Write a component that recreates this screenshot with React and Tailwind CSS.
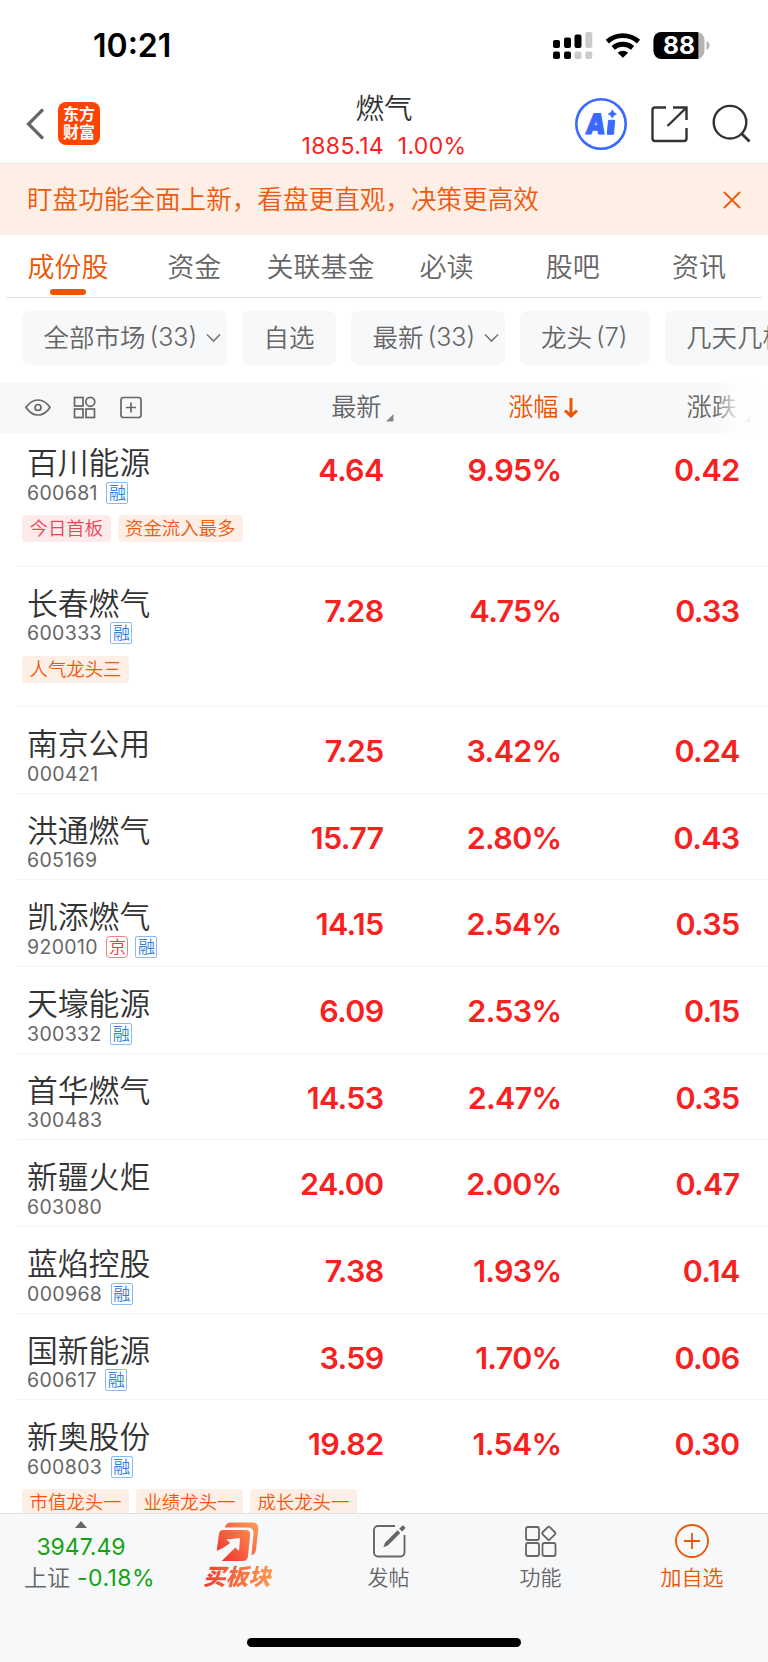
import React from "react";

const rows = [
  { name: "百川能源", code: "600681", marks: ["融"], price: "4.64", pct: "9.95%", diff: "0.42", tags: [["今日首板", "red"], ["资金流入最多", "orange"]] },
  { name: "长春燃气", code: "600333", marks: ["融"], price: "7.28", pct: "4.75%", diff: "0.33", tags: [["人气龙头三", "orange"]] },
  { name: "南京公用", code: "000421", marks: [], price: "7.25", pct: "3.42%", diff: "0.24" },
  { name: "洪通燃气", code: "605169", marks: [], price: "15.77", pct: "2.80%", diff: "0.43" },
  { name: "凯添燃气", code: "920010", marks: ["京", "融"], price: "14.15", pct: "2.54%", diff: "0.35" },
  { name: "天壕能源", code: "300332", marks: ["融"], price: "6.09", pct: "2.53%", diff: "0.15" },
  { name: "首华燃气", code: "300483", marks: [], price: "14.53", pct: "2.47%", diff: "0.35" },
  { name: "新疆火炬", code: "603080", marks: [], price: "24.00", pct: "2.00%", diff: "0.47" },
  { name: "蓝焰控股", code: "000968", marks: ["融"], price: "7.38", pct: "1.93%", diff: "0.14" },
  { name: "国新能源", code: "600617", marks: ["融"], price: "3.59", pct: "1.70%", diff: "0.06" },
  { name: "新奥股份", code: "600803", marks: ["融"], price: "19.82", pct: "1.54%", diff: "0.30", tags: [["市值龙头一", "orange"], ["业绩龙头一", "orange"], ["成长龙头一", "orange"]] },
];

function StatusBar() {
  return (
    <div className="flex h-[82px] shrink-0 items-start pt-[26px] pl-[93px]">
      <div className="w-[460px] text-[32px] leading-[40px] font-semibold text-black">10:21</div>
      <svg className="mt-[4px]" width="160" height="32" viewBox="553 30 160 32">
        <g fill="#000">
          <rect x="553" y="40" width="7" height="8" rx="2" />
          <rect x="564" y="37.5" width="7" height="10.5" rx="2" />
          <rect x="574.5" y="34.5" width="7" height="13.5" rx="2" />
          <rect x="553" y="51.5" width="7" height="7.5" rx="2" />
          <rect x="564" y="51.5" width="7" height="7.5" rx="2" />
        </g>
        <g fill="#cbcbcb">
          <rect x="585.3" y="32" width="7" height="16" rx="2" />
          <rect x="574.5" y="51.5" width="7" height="7.5" rx="2" />
          <rect x="585.3" y="51.5" width="7" height="7.5" rx="2" />
        </g>
        <g fill="none" stroke="#000" strokeWidth="4.8">
          <path d="M607.3 41.6a23.5 23.5 0 0 1 31.2 0" />
          <path d="M613.2 47.8a15 15 0 0 1 19.4 0" />
        </g>
        <path d="M617.6 52.7a8.2 8.2 0 0 1 10.6 0l-5.3 5.1z" fill="#000" />
        <clipPath id="battery"><rect x="653.5" y="32" width="51" height="27" rx="8" /></clipPath>
        <g clipPath="url(#battery)">
          <rect x="653" y="32" width="52" height="27" fill="#b4b4b4" />
          <rect x="653" y="32" width="45.3" height="27" fill="#000" />
        </g>
        <path d="M706.5 41c1.800.600 3 2.300 3 4.500s-1.200 3.900-3 4.500z" fill="#b4b4b4" />
        <text x="679" y="54.300" textAnchor="middle" fontSize="24.500" fontWeight="700" fill="#fff" fontFamily="Inter">88</text>
      </svg>
    </div>
  );
}

function Header() {
  return (
    <header className="flex h-[82px] shrink-0 items-start border-b border-[#e6e8ea]">
      <svg className="mt-[26px] ml-[26px]" width="18" height="32" viewBox="0 0 18 32" fill="none" stroke="#666" strokeWidth="3.200">
        <path d="M17 1.500L2.500 16l14.500 14.500" />
      </svg>
      <div className="mt-[20px] ml-[14px] flex h-[43px] w-[42px] flex-col items-center justify-center rounded-[8px] bg-[#ff4400] text-[16px] leading-[17.500px] font-bold text-white">
        <span>东方</span>
        <span>财富</span>
      </div>
      <div className="ml-[184px] flex w-[200px] flex-col items-center">
        <div className="mt-[9px] text-[28.500px] leading-[36px] font-[350] text-[#333]">燃气</div>
        <div className="mt-[1px] text-[23px] leading-[36px] tracking-[0.350px] whitespace-pre text-[#f7221f]">1885.14  1.00%</div>
      </div>
      <svg className="mt-[12px] ml-[91px]" width="180" height="60" viewBox="575 94 180 60" fill="none">
        <circle cx="601" cy="124" r="24.700" stroke="#3a69ff" strokeWidth="2.600" />
        <text transform="translate(585 133.500) skewX(-7)" fontFamily="Inter" fontSize="28" fontWeight="900" fill="#3a69ff" stroke="#3a69ff" strokeWidth="1.200" strokeLinejoin="round" textLength="19.500" lengthAdjust="spacingAndGlyphs">A</text>
        <path d="M608.500 120.300h6.200l-1.200 14h-6.200z" fill="#3a69ff" stroke="#3a69ff" strokeWidth="1" strokeLinejoin="round" />
        <path d="M612.300 109.800l1.500 2.700 2.700 1.500-2.700 1.500-1.500 2.700-1.500-2.700-2.700-1.500 2.700-1.500z" fill="#3a69ff" stroke="#3a69ff" strokeWidth=".6" />
        <g stroke="#333" strokeWidth="2.400">
          <path d="M666 107.500h-11a2.500 2.500 0 0 0-2.500 2.500v28.500a2.500 2.500 0 0 0 2.500 2.500h29a2.500 2.500 0 0 0 2.500-2.500V128" />
          <path d="M673 107.500h13.500V120M686 108l-18.500 18" />
          <circle cx="730" cy="122.200" r="16.300" />
          <path d="M741 133l8.500 8.500" strokeWidth="2.800" />
        </g>
      </svg>
    </header>
  );
}

const tabs = ["资金", "关联基金", "必读", "股吧", "资讯"];

function Tabs() {
  return (
    <nav className="mx-[6px] h-[63px] shrink-0 border-b border-[#e2e4e6] pt-[13px]">
      <div className="-ml-px grid grid-cols-6 text-center text-[27px] leading-[40px] font-[350] text-[#666]">
        <div className="flex flex-col items-center text-[#ee5500]">
          <span>成份股</span>
          <span className="mt-[1px] h-[5.500px] w-[36px] rounded-full bg-[#ee5500]" />
        </div>
        {tabs.map((t) => <span key={t} className="whitespace-nowrap">{t}</span>)}
      </div>
    </nav>
  );
}

function Chip({ label, count, arrow, width }) {
  return (
    <div className={`flex h-[54px] shrink-0 items-center rounded-[7px] bg-[#f7f8fa] pl-[21.500px] text-[#666] ${width}`}>
      <span className="text-[25.500px] font-[350] whitespace-nowrap">{label}</span>
      {count && <span className="ml-[4px] text-[25px] font-[350]">{count}</span>}
      {arrow && (
        <svg className="ml-[9px]" width="15" height="10" viewBox="0 0 15 10" fill="none" stroke="#777" strokeWidth="1.600">
          <path d="M1 1.500l6.500 6.500L14 1.500" />
        </svg>
      )}
    </div>
  );
}

function TableHead() {
  return (
    <div className="flex h-[50px] shrink-0 items-center bg-[#f7f8fa] text-[25.200px] font-[350] text-[#666]">
      <svg className="ml-[25px]" width="120" height="24" viewBox="25 396 120 24" fill="none" stroke="#666" strokeWidth="1.700">
        <path d="M26 407.500c3-4.500 7-7.500 12-7.500s9 3 12 7.500c-3 4.500-7 7.500-12 7.500s-9-3-12-7.500z" />
        <circle cx="38" cy="407.500" r="3" />
        <rect x="74.500" y="397.500" width="8.500" height="8.500" />
        <circle cx="90.300" cy="401.800" r="4.500" />
        <rect x="74.500" y="409" width="8.500" height="8.500" />
        <rect x="86" y="409" width="8.500" height="8.500" />
        <rect x="121" y="397.500" width="20" height="20" rx="2.500" />
        <path d="M131 402.500v10M126 407.500h10" />
      </svg>
      <div className="flex w-[248.500px] items-center justify-end">
        <span>最新</span>
        <svg className="mt-[21px] ml-[4px]" width="8" height="8" viewBox="0 0 8 8"><path d="M7.500 0v7.500H0z" fill="#888" /></svg>
      </div>
      <div className="flex w-[184px] items-center justify-end text-[#ee5500]">
        <span>涨幅</span>
        <svg className="ml-[5px]" width="14" height="20" viewBox="0 0 14 20" fill="none" stroke="#ee5500" strokeWidth="3">
          <path d="M7 0v18M1 12.500l6 5.500 6-5.500" />
        </svg>
      </div>
      <div className="relative flex h-full w-[190.500px] items-center pl-[109px]">
        <span>涨跌</span>
        <svg className="mt-[21px] ml-[6px]" width="8" height="8" viewBox="0 0 8 8"><path d="M7.500 0v7.500H0z" fill="#999" /></svg>
        <div className="absolute top-0 right-0 h-full w-[54px] bg-linear-to-r from-white/0 via-white/80 via-40% to-white" />
      </div>
    </div>
  );
}

function Mark({ text }) {
  const tone = text === "京" ? "border-[#f4817f] text-[#ee3a3a] rounded-[4px]" : "border-[#8abaf0] text-[#2f7fd8] rounded-[2px]";
  return <span className={`flex h-[22px] w-[22px] items-center justify-center border-[1.500px] text-[17px] leading-[18px] font-[350] ${tone}`}>{text}</span>;
}

function Row({ row, first }) {
  const height = first ? "h-[133.600px]" : row.tags ? "h-[140.600px]" : "h-[86.650px]";
  return (
    <div className={`ml-[18px] shrink-0 border-b-[1px] border-[#f2f3f5] pl-[9px] ${height} ${first ? "" : "pt-[7px]"}`}>
      <div className="flex">
        <div className="w-[205px]">
          <div className="mt-[10px] text-[30.800px] leading-[40px] font-[350] whitespace-nowrap text-[#333]">{row.name}</div>
          <div className="-mt-[1.500px] flex h-[22px] items-center gap-[7px]">
            <span className="mr-[1.500px] text-[19.500px] leading-[22px] tracking-[0.350px] text-[#666]">{row.code}</span>
            {row.marks.map((m) => <Mark key={m} text={m} />)}
          </div>
        </div>
        <div className="mt-[17px] flex h-[40px] text-right text-[30.500px] leading-[40px] font-semibold tracking-[-0.700px] text-[#f7221f]">
          <span className="w-[151.500px]">{row.price}</span>
          <span className="w-[178px]">{row.pct}</span>
          <span className="w-[178px]">{row.diff}</span>
        </div>
      </div>
      {row.tags && (
        <div className="mt-[11.500px] -ml-[5px] flex gap-[7px]">
          {row.tags.map(([t, tone]) => (
            <span key={t} className={`h-[27px] rounded-[4px] px-[7.500px] text-[18.400px] leading-[27px] font-[350] whitespace-nowrap ${tone === "red" ? "bg-[#fdebec] text-[#e8475a]" : "bg-[#fdeee6] text-[#ee5a0c]"}`}>{t}</span>
          ))}
        </div>
      )}
    </div>
  );
}

function BottomBar() {
  return (
    <footer className="flex h-[149px] shrink-0 flex-col items-center border-t border-[#dfe1e4] bg-[#f7f8fa]">
      <div className="flex h-[124px] w-full text-[21px] leading-[30px] font-[350] text-[#666]">
        <div className="flex w-[162px] flex-col items-center font-normal">
          <svg className="mt-[7px]" width="12" height="7" viewBox="0 0 12 7"><path d="M0 7l6-7 6 7z" fill="#666" /></svg>
          <div className="mt-[4px] text-[23px] text-[#12a312]">3947.49</div>
          <div className="mt-[1px] ml-[17px] flex gap-[7px] text-[23px] whitespace-nowrap"><span className="font-[350]">上证</span><span className="tracking-[0.450px] text-[#12a312]">-0.18%</span></div>
        </div>
        <div className="flex w-[150px] flex-col items-center">
          <svg className="mt-[7px]" width="44" height="42" viewBox="215 1521 44 42">
            <defs>
              <linearGradient id="hot" gradientUnits="userSpaceOnUse" x1="217" y1="1560" x2="257" y2="1524"><stop offset="0" stopColor="#ee2f2c" /><stop offset="1" stopColor="#fd9a54" /></linearGradient>
            </defs>
            <path d="M225 1527.500q.800-5 5.500-5h22q6 0 5.800 6.500l-2.300 21q-.700 4.500-4.500 5l2-21q.500-6.500-5.500-6.500z" fill="url(#hot)" />
            <path d="M223 1530h22.500q5 0 4.600 5l-2.100 21q-.500 5-5.500 5h-20.800l-5-10 2.300-17q.500-4 4-4z" fill="url(#hot)" />
            <path d="M216 1551.200q7-2.700 14.300-8.200l-4-3.500 13.700-1.500-1 13-3.600-3.600-13.700 13.600q-4.700-4-5.700-9.800z" fill="#f7f8fa" />
          </svg>
          <span className="-mt-px bg-linear-to-r from-[#ee2f2c] to-[#fd9a54] bg-clip-text px-[3px] text-[22.500px] leading-[30px] font-black text-transparent italic">买板块</span>
        </div>
        <div className="flex w-[153px] flex-col items-center">
          <svg className="mt-[10px]" width="34" height="34" viewBox="372 1524 34 34" fill="none" stroke="#666" strokeWidth="1.900">
            <path d="M395 1526h-17a4 4 0 0 0-4 4v22.500a4 4 0 0 0 4 4h22.500a4 4 0 0 0 4-4V1535" />
            <path d="M383.300 1547.300l1.700-4.600 12.500-12.500 2.800 2.800-12.500 12.500zM399.200 1528.700l2.800-2.700q1-.900 2 0l.800.800q.900 1 0 2l-2.700 2.800z" fill="#666" stroke="none" />
          </svg>
          <span className="mt-[5px]">发帖</span>
        </div>
        <div className="flex w-[151px] flex-col items-center">
          <svg className="mt-[10px]" width="34" height="34" viewBox="524 1524 34 34" fill="none" stroke="#666" strokeWidth="1.800">
            <rect x="526" y="1527" width="13" height="13" rx="2" />
            <rect x="526" y="1543" width="13" height="13" rx="2" />
            <rect x="542.500" y="1543" width="13" height="13" rx="2" />
            <rect x="543.700" y="1528.200" width="10.200" height="10.200" rx="1.500" transform="rotate(45 548.800 1533.300)" />
          </svg>
          <span className="mt-[5px]">功能</span>
        </div>
        <div className="flex w-[152px] flex-col items-center text-[#ee5500]">
          <svg className="mt-[10px]" width="34" height="34" viewBox="0 0 34 34" fill="none" stroke="#ee5500" strokeWidth="1.800">
            <circle cx="17" cy="17" r="16" />
            <path d="M17 9v16M9 17h16" />
          </svg>
          <span className="mt-[5px]">加自选</span>
        </div>
      </div>
      <div className="h-[9px] w-[274px] rounded-full bg-black" />
    </footer>
  );
}

export default function App() {
  return (
    <div className="flex h-[1662px] w-[768px] flex-col overflow-hidden bg-white font-['Inter','Noto_Sans_CJK_SC',sans-serif]">
      <StatusBar />
      <Header />
      <div className="flex h-[71px] shrink-0 items-center justify-between bg-[#fdeee6] pr-[27px] pl-[27px] text-[25.600px] font-[350] text-[#ee5a0c]">
        <span className="pt-[2px]">盯盘功能全面上新，看盘更直观，决策更高效</span>
        <svg width="18" height="18" viewBox="0 0 18 18" fill="none" stroke="#ee5a0c" strokeWidth="1.800"><path d="M1 1l16 16M17 1L1 17" /></svg>
      </div>
      <Tabs />
      <div className="mt-[13px] mb-[18px] flex shrink-0 gap-[15px] overflow-hidden pl-[22px]">
        <Chip label="全部市场" count="(33)" arrow width="w-[205px]" />
        <Chip label="自选" width="w-[94px]" />
        <Chip label="最新" count="(33)" arrow width="w-[153.500px]" />
        <Chip label="龙头" count="(7)" width="w-[130px]" />
        <Chip label="几天几板" width="w-[150px]" />
      </div>
      <TableHead />
      <main className="flex min-h-0 flex-1 flex-col overflow-hidden">
        {rows.map((r, i) => <Row key={r.code} row={r} first={i === 0} />)}
      </main>
      <BottomBar />
    </div>
  );
}
